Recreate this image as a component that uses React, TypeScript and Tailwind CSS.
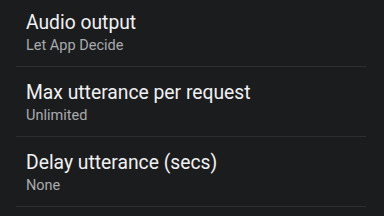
const rows = [
  { title: "Audio output", value: "Let App Decide" },
  { title: "Max utterance per request", value: "Unlimited" },
  { title: "Delay utterance (secs)", value: "None" },
];

export default function App() {
  return (
    <div
      className="w-[384px] h-[216px] overflow-hidden bg-[#1b1c1e] px-4"
      style={{ fontFamily: "Roboto, 'Liberation Sans', sans-serif" }}
    >
      <div className="-mt-[3px] w-[350px]">
        {rows.map((row) => (
          <div
            key={row.title}
            className="h-[70px] border-b border-[#2c2e31] pl-[10px] pt-[14px] flex flex-col"
          >
            <div className="text-[19.3px] leading-[24px] text-[#f1f1f1]">{row.title}</div>
            <div className="mt-[1px] text-[14.5px] leading-[20px] text-[#a9abad]">{row.value}</div>
          </div>
        ))}
      </div>
    </div>
  );
}
